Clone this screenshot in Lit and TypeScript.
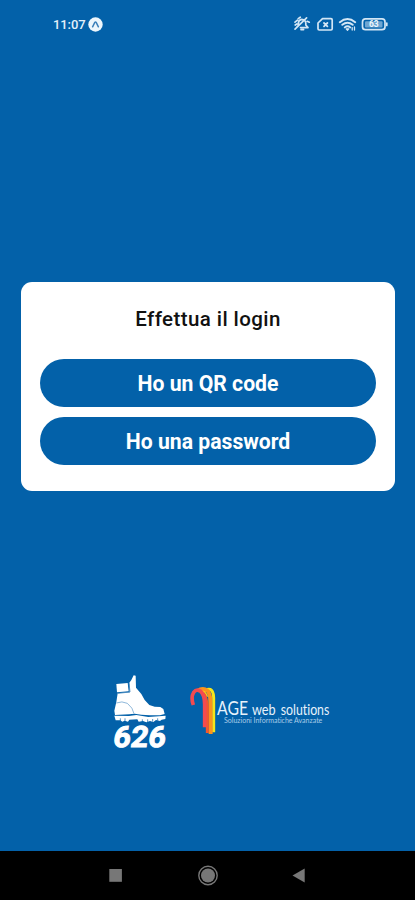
import { LitElement, html, css, svg } from "lit";
import { customElement } from "lit/decorators.js";

@customElement("status-bar")
class StatusBar extends LitElement {
  static styles = css`
    :host { display: flex; justify-content: space-between; align-items: center; height: 48px; padding: 0 27px 0 53px; }
    .left { display: flex; align-items: center; gap: 3px; color: #e3f0fa; font: 500 13px Roboto, sans-serif; letter-spacing: -0.1px; }
    svg { display: block; }
  `;
  render() {
    return html`
      <div class="left">
        <span>11:07</span>
        <svg width="15" height="15" viewBox="0 0 15 15">
          <circle cx="7.5" cy="7.5" r="7.2" fill="#edf6fc" />
          <path d="M4.6 9.8 6.8 5.4Q7.5 4.4 8.2 5.4L10.4 9.8" fill="none" stroke="#3d80ba" stroke-width="1.5" stroke-linecap="round" />
        </svg>
      </div>
      <svg width="95" height="18" viewBox="0 0 95 18" fill="none" stroke="#d3e6f5" stroke-width="1.5" stroke-linejoin="round" stroke-linecap="round">
        <path d="M3.5 12.5 5.3 10.5V8.2Q5.5 5 8.8 4.3 12.5 4.6 12.8 8V10L15 12.6H7.5M8 14.6H10.6M2 14.2 13.6 2.8M2 7.2 4.5 5.2M2.2 10 3.8 9M14.2 6.3 16.3 7.2M7.3 2.2 5.2 3.6" stroke-width="1.7" />
        <path d="M29.5 3.7H38Q39.2 3.7 39.2 4.9V13.8Q39.2 15 38 15H26.2Q25 15 25 13.8V8Z" stroke-width="1.7" />
        <path d="M31 8 34.4 11.4M34.4 8 31 11.4" stroke-width="1.8" />
        <path d="M46.8 7.2Q54.5 1 62.2 7.2M49.3 9.8Q54.5 5.6 59.7 9.8M51.8 12.4Q54.5 10 57.2 12.4" stroke-width="1.9" />
        <path d="M53.2 13.9H55.8L54.5 15.2ZM59.2 12.6V15M61.5 11.9V15" stroke-width="1.3" />
        <rect x="69.5" y="3.9" width="22.5" height="10.8" rx="3" stroke-width="1.7" />
        <path d="M93.8 8V10.5" stroke-width="1.7" />
        <rect x="72" y="6.2" width="17.5" height="6.2" rx="1" fill="#6ea5d1" stroke="none" />
        <text x="80.8" y="12.4" text-anchor="middle" font-family="Roboto, sans-serif" font-size="8.5" font-weight="700" fill="#edf6fc" stroke="none">63</text>
      </svg>
    `;
  }
}

@customElement("login-card")
class LoginCard extends LitElement {
  static styles = css`
    :host { display: flex; flex-direction: column; box-sizing: border-box; height: 209px; padding: 0 19px; background: #fff; border-radius: 11px; font-family: Roboto, sans-serif; text-align: center; }
    h1 { margin: 25px 0 27.5px; height: 24px; font-size: 20.5px; line-height: 24px; font-weight: 500; letter-spacing: 0.42px; color: #111; }
    .actions { display: flex; flex-direction: column; gap: 10px; }
    button { height: 48px; padding: 2px 0 0; border: 0; border-radius: 24px; background: #0361a9; color: #fff; font: 700 21.2px Roboto, sans-serif; letter-spacing: 0; }
  `;
  render() {
    return html`
      <h1>Effettua il login</h1>
      <div class="actions">
        <button>Ho un QR code</button>
        <button>Ho una password</button>
      </div>
    `;
  }
}

const boot = svg`
  <path d="M49 57 83 54 86 79 51 82Z" fill="#fff" />
  <path d="M88 53 94 45 101 31 107 32 108 68 124 87 134 105 148 120 164 125 181 126 190 132 194 147 180 151 150 151 124 149 104 146 88 148 45 150 43 137 49 111 53 85 89 82Z" fill="#fff" />
  <path d="M49 114Q66 107 82 115 99 128 102 146" fill="none" stroke="#78a9d2" stroke-width="2.5" />
  <path d="M87 55 90 81 53 85" fill="none" stroke="#3e84bd" stroke-width="2.5" />
  <path d="M43 152 87 153 109 150 145 156 197 152 196 162 185 164 180 168 168 165 160 171 150 168 139 172 129 168 116 170 112 163 88 164 84 170 74 167 67 170 61 166 47 166Z" fill="#fff" />
  <path d="M61 160V168M75 160V169M127 163V171M143 163V171M158 162V170M173 160V167" stroke="#0361a9" stroke-width="2" />
  <text transform="translate(37 247) skewX(-8)" x="0" y="0" textLength="157" lengthAdjust="spacingAndGlyphs" font-family="Roboto, sans-serif" font-size="88" font-weight="700" fill="#fff" stroke="#fff" stroke-width="3" stroke-linejoin="miter">626</text>
`;

const age = svg`
  <g fill="none" stroke-linecap="butt">
    <path d="M69 53Q79 40 91 43 101 48 101 68V172" stroke="#f5e51b" stroke-width="9" />
    <path d="M53 48Q68 37 82 47 91 56 91 79L92 177" stroke="#fb931e" stroke-width="12" />
    <path d="M60 50Q75 46 82 65" stroke="#fbc51c" stroke-width="5" />
    <path d="M69 55Q81 68 82 98V174" stroke="#f4572f" stroke-width="9" />
    <path d="M40 90Q32 67 41 52 49 41 61 48 74 59 74 88V157" stroke="#f34b50" stroke-width="11" />
  </g>
  <g class="wordmark" fill="#e7f2fb">
    <text x="111" y="121" font-size="60" textLength="93" lengthAdjust="spacingAndGlyphs">AGE</text>
    <text x="216" y="121" font-size="45" textLength="71" lengthAdjust="spacingAndGlyphs">web</text>
    <text x="302" y="121" font-size="45" textLength="146" lengthAdjust="spacingAndGlyphs">solutions</text>
    <text x="132" y="143" font-size="23" textLength="295" lengthAdjust="spacingAndGlyphs" fill="#a9cce8">Soluzioni Informatiche Avanzate</text>
  </g>
`;

@customElement("brand-row")
class BrandRow extends LitElement {
  static styles = css`
    :host { display: flex; align-items: flex-start; justify-content: center; padding-left: 25px; }
    svg { display: block; flex: none; }
    .age { margin-top: 10px; }
    .wordmark { font-family: Lato, sans-serif; font-variant-ligatures: none; }
  `;
  render() {
    return html`
      <svg width="80" height="95" viewBox="0 0 240 285">${boot}</svg>
      <svg class="age" width="160" height="70" viewBox="0 0 480 210">${age}</svg>
    `;
  }
}

@customElement("nav-bar")
class NavBar extends LitElement {
  static styles = css`
    :host { display: flex; justify-content: center; height: 49px; padding-left: 5px; background: #000; }
    svg { display: block; }
  `;
  render() {
    return html`
      <svg width="240" height="49" viewBox="0 0 240 49">
        <rect x="19.3" y="18" width="12.6" height="12.8" fill="#777" />
        <circle cx="118" cy="24.5" r="9.2" fill="none" stroke="#777" stroke-width="1.4" />
        <circle cx="118" cy="24.5" r="7" fill="#777" />
        <path d="M202.5 24.5 214.7 17.4V31.6Z" fill="#777" />
      </svg>
    `;
  }
}

@customElement("app-root")
class AppRoot extends LitElement {
  static styles = css`
    :host { display: flex; flex-direction: column; height: 900px; background: #0361a9; overflow: hidden; }
    login-card { margin: 234px 20px 0 21px; }
    brand-row { margin-top: 174px; }
    nav-bar { margin-top: auto; }
  `;
  render() {
    return html`
      <status-bar></status-bar>
      <login-card></login-card>
      <brand-row></brand-row>
      <nav-bar></nav-bar>
    `;
  }
}
